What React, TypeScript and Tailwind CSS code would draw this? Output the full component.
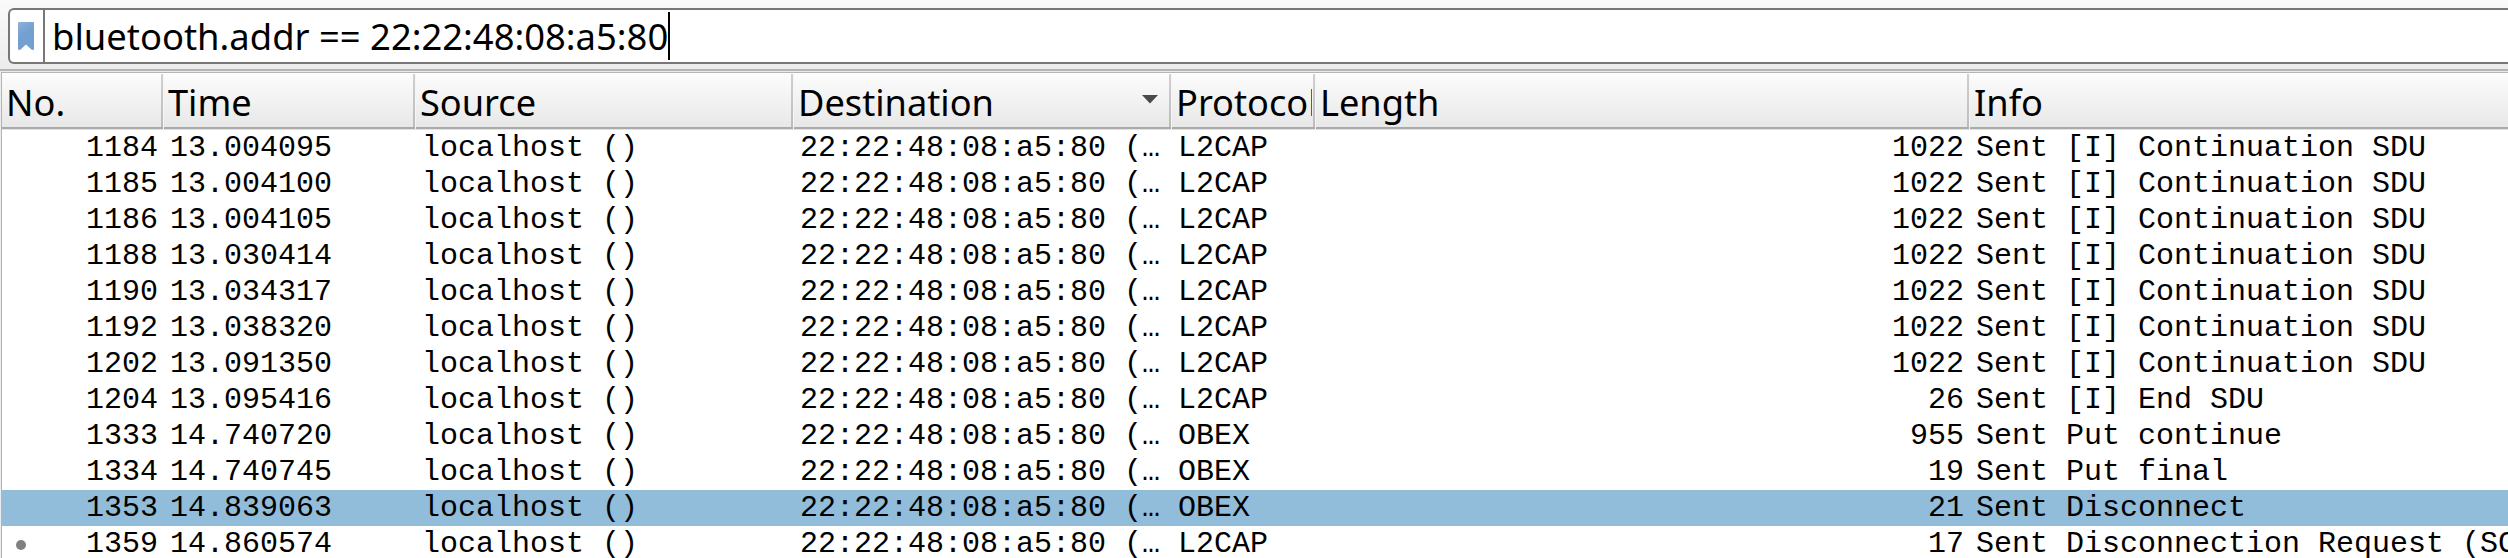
const cols =
  "grid grid-cols-[161px_252px_378px_378px_144px_654px_minmax(0,1fr)]";

type Packet = [string, string, string, string, string];

const packets: Packet[] = [
  ["1184", "13.004095", "L2CAP", "1022", "Sent [I] Continuation SDU"],
  ["1185", "13.004100", "L2CAP", "1022", "Sent [I] Continuation SDU"],
  ["1186", "13.004105", "L2CAP", "1022", "Sent [I] Continuation SDU"],
  ["1188", "13.030414", "L2CAP", "1022", "Sent [I] Continuation SDU"],
  ["1190", "13.034317", "L2CAP", "1022", "Sent [I] Continuation SDU"],
  ["1192", "13.038320", "L2CAP", "1022", "Sent [I] Continuation SDU"],
  ["1202", "13.091350", "L2CAP", "1022", "Sent [I] Continuation SDU"],
  ["1204", "13.095416", "L2CAP", "26", "Sent [I] End SDU"],
  ["1333", "14.740720", "OBEX", "955", "Sent Put continue"],
  ["1334", "14.740745", "OBEX", "19", "Sent Put final"],
  ["1353", "14.839063", "OBEX", "21", "Sent Disconnect"],
  ["1359", "14.860574", "L2CAP", "17", "Sent Disconnection Request (SCID: 0x0041)"],
];

const headers = ["No.", "Time", "Source", "Destination", "Protocol", "Length", "Info"];
const selected = "1353";
const related = "1359";

function FilterBar() {
  return (
    <div className="h-[69px] bg-linear-to-b from-[#fafafa] to-[#ececec] pt-2 pl-2">
      <div className="flex h-14 rounded-l-md border-2 border-r-0 border-[#777777] bg-white">
        <div className="flex w-[35px] shrink-0 items-center border-r-2 border-[#777777] pl-2">
          <svg width="16" height="28" viewBox="0 0 16 28">
            <defs>
              <linearGradient id="mark" x1="0" y1="0" x2="0.4" y2="1">
                <stop offset="0" stopColor="#8fb2dc" />
                <stop offset="0.5" stopColor="#739fd1" />
                <stop offset="1" stopColor="#739fd1" />
              </linearGradient>
            </defs>
            <path d="M1 0H15Q16 0 16 1V27.5L14 28L8 22.5L2 28L0 27.5V1Q0 0 1 0Z" fill="url(#mark)" />
          </svg>
        </div>
        <div className="flex items-start pt-0.5 pl-[7px]">
          <span className="text-[36.4px] leading-[48px] whitespace-pre">
            bluetooth.addr == 22:22:48:08:a5:80
          </span>
          <span className="h-12 w-0.5 shrink-0 bg-black" />
        </div>
      </div>
    </div>
  );
}

function HeaderRow() {
  return (
    <div className={`${cols} h-14 border-b border-[#e4e4e4] text-[36.2px] leading-[57px]`}>
      {headers.map((label, i) => (
        <div key={label} className={i > 0 ? "flex border-l border-[#f6f6f6]" : "flex"}>
          <div className="flex h-[55px] min-w-0 flex-1 border-b-2 border-[#aaaaaa] bg-linear-to-b from-[#fcfcfc] to-[#e8e8e8]">
            <div className="mr-px ml-1 min-w-0 flex-1 overflow-hidden whitespace-nowrap">{label}</div>
            {label === "Destination" && (
              <svg className="mt-[21px] mr-[11px] shrink-0" width="16" height="9" viewBox="0 0 16 9">
                <path d="M0 0H16L8 8.5Z" fill="#4a4a4a" />
              </svg>
            )}
            {i < headers.length - 1 && (
              <div className="h-[53px] w-0.5 shrink-0 bg-linear-to-b from-[#d0d0d0] to-[#bcbcbc]" />
            )}
          </div>
        </div>
      ))}
    </div>
  );
}

function PacketRow({ packet }: { packet: Packet }) {
  const [no, time, protocol, length, info] = packet;
  return (
    <div className={`${cols} h-9 whitespace-pre ${no === selected ? "bg-[#91bcda]" : "bg-white"}`}>
      <div className="flex items-center justify-end pr-[5px]">
        {no === related && <span className="mt-0.5 mr-auto ml-3.5 size-2.5 rounded-full bg-[#808080]" />}
        <span>{no}</span>
      </div>
      <div className="pl-[7px]">{time}</div>
      <div className="pl-[7px]">localhost ()</div>
      <div className="pl-[7px]">22:22:48:08:a5:80 (…</div>
      <div className="pl-[7px]">{protocol}</div>
      <div className="pr-[5px] text-right">{length}</div>
      <div className="overflow-hidden pl-[7px]">{info}</div>
    </div>
  );
}

export default function App() {
  return (
    <div className="h-[558px] w-[2508px] overflow-hidden bg-[#ececec] font-['Noto_Sans',sans-serif] text-black">
      <FilterBar />
      <div className="h-0.5 bg-[#b4b4b4]" />
      <div className="mt-px ml-px h-[486px] overflow-hidden border-t border-l border-[#b4b4b4] bg-white pt-px">
        <HeaderRow />
        <div className="font-['Liberation_Mono',monospace] text-[30px] leading-9">
          {packets.map((p) => (
            <PacketRow key={p[0]} packet={p} />
          ))}
        </div>
      </div>
    </div>
  );
}
